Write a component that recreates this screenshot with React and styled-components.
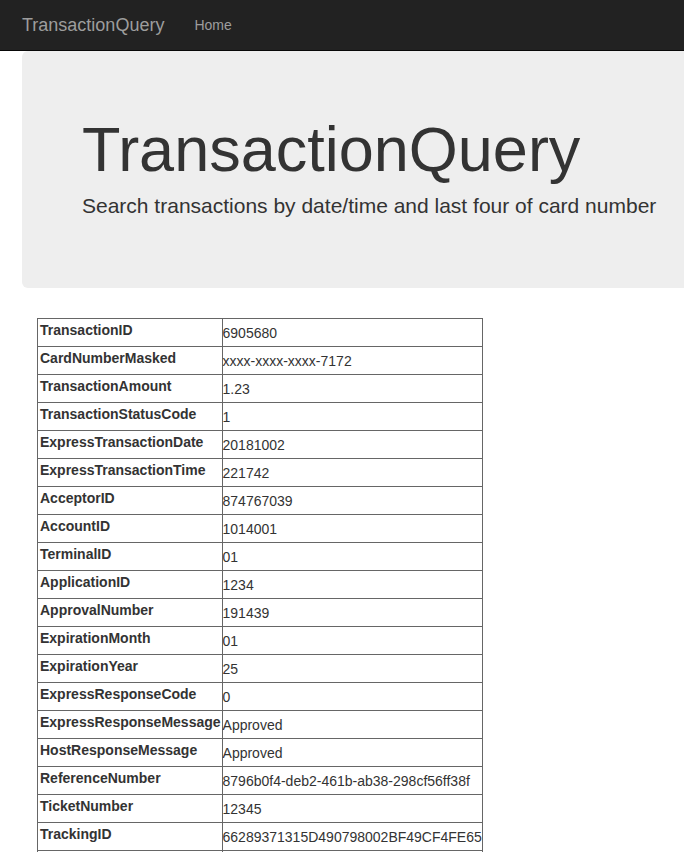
import React from "react";
import styled, { createGlobalStyle } from "styled-components";

const GlobalStyle = createGlobalStyle`
  html, body {
    margin: 0;
    padding: 0;
    overflow-x: hidden;
  }

  body {
    background-color: #fff;
    color: #333;
    font-family: "Liberation Sans", Arial, Helvetica, sans-serif;
    font-size: 14px;
    line-height: 1.42857;
  }
`;

const Navbar = styled.nav`
  display: flex;
  align-items: center;
  height: 50px;
  padding-left: 7px;
  background-color: #222;
  border-bottom: 1px solid #080808;
`;

const Brand = styled.a`
  padding: 0 15px;
  font-size: 18px;
  line-height: 20px;
  color: #9d9d9d;
  text-decoration: none;
`;

const NavLink = styled.a`
  padding: 0 15px;
  font-size: 14px;
  line-height: 20px;
  color: #9d9d9d;
  text-decoration: none;
`;

const Main = styled.main`
  width: 720px;
  padding-left: 22px;
`;

const Jumbotron = styled.section`
  padding: 0 60px 67px;
  margin-bottom: 30px;
  background-color: #eee;
  border-radius: 6px;
  overflow: hidden;
`;

const Title = styled.h1`
  margin: 0;
  padding-top: 64px;
  font-size: 63px;
  font-weight: 500;
  line-height: 1.1;
  color: #333;
`;

const Lead = styled.p`
  margin: 7px 0 0;
  font-size: 21px;
  font-weight: 200;
  line-height: 30px;
  color: #333;
  white-space: nowrap;
`;

const DetailTable = styled.table`
  margin-left: 15px;
  border-collapse: collapse;
  border: 1px solid #666;
`;

const Row = styled.tr`
  height: 28px;
`;

const Label = styled.th`
  padding: 1px 1px 0 2px;
  border: 1px solid #666;
  vertical-align: top;
  text-align: left;
  font-weight: bold;
  line-height: 20px;
  white-space: nowrap;
`;

const Value = styled.td`
  padding: 0;
  border: 1px solid #666;
  vertical-align: middle;
  line-height: 20px;
  white-space: nowrap;
`;

const transaction = [
  ["TransactionID", "6905680"],
  ["CardNumberMasked", "xxxx-xxxx-xxxx-7172"],
  ["TransactionAmount", "1.23"],
  ["TransactionStatusCode", "1"],
  ["ExpressTransactionDate", "20181002"],
  ["ExpressTransactionTime", "221742"],
  ["AcceptorID", "874767039"],
  ["AccountID", "1014001"],
  ["TerminalID", "01"],
  ["ApplicationID", "1234"],
  ["ApprovalNumber", "191439"],
  ["ExpirationMonth", "01"],
  ["ExpirationYear", "25"],
  ["ExpressResponseCode", "0"],
  ["ExpressResponseMessage", "Approved"],
  ["HostResponseMessage", "Approved"],
  ["ReferenceNumber", "8796b0f4-deb2-461b-ab38-298cf56ff38f"],
  ["TicketNumber", "12345"],
  ["TrackingID", "66289371315D490798002BF49CF4FE65"],
  ["", ""]
];

const App = () => {
  return (
    <>
      <GlobalStyle />
      <Navbar>
        <Brand href="#">TransactionQuery</Brand>
        <NavLink href="#">Home</NavLink>
      </Navbar>
      <Main>
        <Jumbotron>
          <Title>TransactionQuery</Title>
          <Lead>Search transactions by date/time and last four of card number</Lead>
        </Jumbotron>
        <DetailTable>
          <tbody>
            {transaction.map(([name, value], i) => (
              <Row key={name || i}>
                <Label>{name}</Label>
                <Value>{value}</Value>
              </Row>
            ))}
          </tbody>
        </DetailTable>
      </Main>
    </>
  );
};

export default App;
